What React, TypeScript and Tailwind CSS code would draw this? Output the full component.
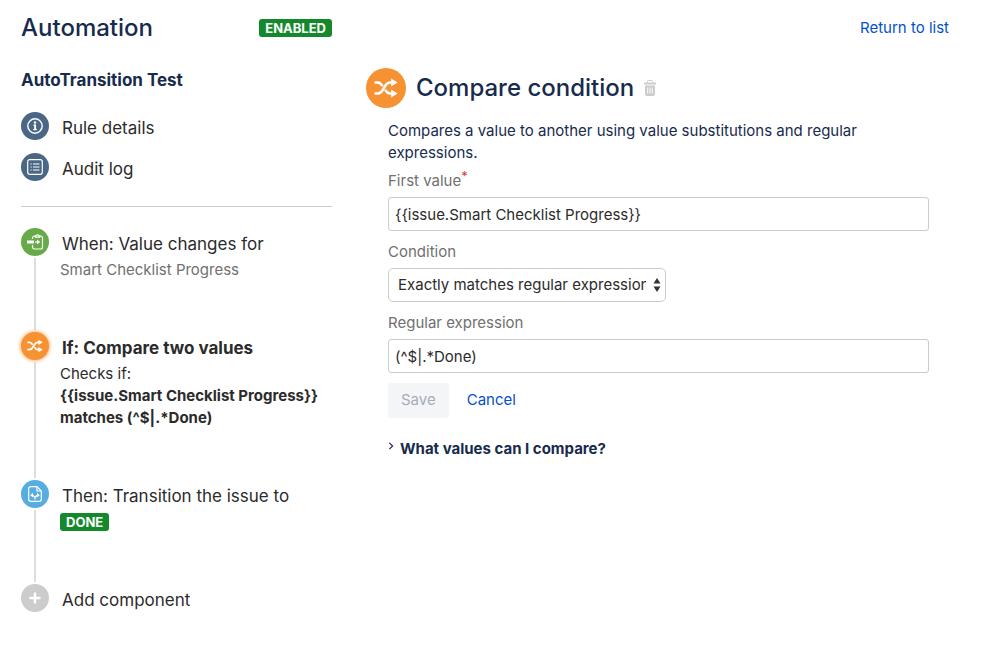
import type { FC, ReactNode } from 'react';
import { useState } from 'react';

type StepProps = {
    icon: ReactNode;
    color: string;
    title: string;
    active?: boolean;
    children?: ReactNode;
};

const ShuffleIcon: FC<{ className: string }> = ({ className }) => (
    <svg viewBox="0 0 24 20" fill="none" className={className} aria-hidden="true">
        <g stroke="currentColor" strokeWidth="2.600">
            <path d="M.5 4.500h3.300c2.300 0 3.500 1.700 4.700 3.700" />
            <path d="M.5 15.500h3.300C10.500 15.500 9.500 4.500 16 4.500h2" />
            <path d="M11.300 11.800c1 2.200 2.200 3.700 4.700 3.700h2" />
        </g>
        <path d="M17.200.5 23.500 4.500l-6.300 4zM17.200 11.500l6.300 4-6.300 4z" fill="currentColor" />
    </svg>
);

const InfoIcon = () => (
    <svg viewBox="0 0 16 16" fill="none" className="size-4" aria-hidden="true">
        <circle cx="8" cy="8" r="7.200" stroke="currentColor" strokeWidth="1.400" />
        <circle cx="8" cy="4.500" r="1.200" fill="currentColor" />
        <path d="M6.500 7.200H8v4.200M6.200 11.600h3.700" stroke="currentColor" strokeWidth="1.200" />
        <path d="M8.200 6.600v5" stroke="currentColor" strokeWidth="1.800" />
    </svg>
);

const ListIcon = () => (
    <svg viewBox="0 0 16 16" fill="none" stroke="currentColor" className="size-4" aria-hidden="true">
        <rect x="0.700" y="0.700" width="14.600" height="14.600" rx="2" strokeWidth="1.200" />
        <path d="M3.500 5h1.200M3.500 8h1.200M3.500 11h1.200M6 5h6.500M6 8h6.500M6 11h6.500" strokeWidth="1.200" />
    </svg>
);

const FieldChangeIcon = () => (
    <svg viewBox="0 0 17 16" fill="none" stroke="currentColor" className="h-4 w-[17px]" aria-hidden="true">
        <path d="M5.500 5V4a2 2 0 0 1 2-2h6a2 2 0 0 1 2 2v9a2 2 0 0 1-2 2h-6a2 2 0 0 1-2-2v-2" strokeWidth="1.200" />
        <path d="M8 3.300V1.800h1.200a1.300 1.300 0 0 1 2.600 0H13v1.500z" strokeWidth="1" />
        <path d="M0 6.500h7v3H0z" fill="currentColor" stroke="none" />
        <path d="M8 8h3" strokeWidth="1.200" />
        <path d="M10 5.500 13.200 8 10 10.500z" fill="currentColor" stroke="none" />
    </svg>
);

const TransitionIcon = () => (
    <svg viewBox="0 0 14 16" fill="none" stroke="currentColor" className="h-4 w-[14px]" aria-hidden="true">
        <path d="M9 .7H2.700a2 2 0 0 0-2 2v10.600a2 2 0 0 0 2 2h8.600a2 2 0 0 0 2-2V5z" strokeWidth="1.200" />
        <path d="M9 .7V5h4.300" strokeWidth="1.200" />
        <path d="M7 13.500v-2.200L4.500 9M7 11.300 9.500 9" strokeWidth="1.200" />
        <path d="M2.200 9.200 5 6.800v4.600zM11.800 9.200 9 6.800v4.600z" fill="currentColor" stroke="none" />
    </svg>
);

const PlusIcon = () => (
    <svg viewBox="0 0 12 12" className="size-3" aria-hidden="true">
        <path d="M6 1.500v9M1.500 6h9" stroke="currentColor" strokeWidth="2.500" strokeLinecap="round" />
    </svg>
);

const TrashIcon = () => (
    <svg viewBox="0 0 12 16" fill="none" className="h-4 w-3" aria-hidden="true">
        <path d="M3.500 2.500V1.200a.7.7 0 0 1 .7-.7h3.600a.7.7 0 0 1 .7.7v1.300" stroke="currentColor" />
        <path d="M0 2.500h12v2H0zM1 5.500h10V14a2 2 0 0 1-2 2H3a2 2 0 0 1-2-2z" fill="currentColor" />
        <path d="M3.700 7.500v6M6 7.500v6M8.300 7.500v6" stroke="#fff" strokeWidth=".9" />
    </svg>
);

const Lozenge: FC<{ children: ReactNode }> = ({ children }) => (
    <span className="rounded-[3px] bg-[#14892c] px-[6px] text-[13px] leading-[18px] font-bold text-white">
        {children}
    </span>
);

const Step: FC<StepProps> = ({ icon, color, title, active, children }) => (
    <li className="flex gap-[11px]">
        <div className="flex flex-col items-center">
            <span
                className={`flex size-7 shrink-0 items-center justify-center rounded-full text-white ${color} ${
                    active ? 'shadow-[0_0_4px_#f79232]' : ''
                }`}
            >
                {icon}
            </span>
            {children && <span className="my-[2px] w-[2px] flex-1 bg-[#ddd]" />}
        </div>
        <div className={children ? 'min-w-0 flex-1 pt-1 pb-[51px]' : 'pt-1'}>
            <button
                type="button"
                className={`block pl-[2px] text-left text-[17px] leading-6 whitespace-nowrap ${active ? 'font-bold' : ''}`}
            >
                {title}
            </button>
            {children && <div className="mt-[3px] text-[15px] leading-[22px] whitespace-nowrap">{children}</div>}
        </div>
    </li>
);

const App = () => {
    const [firstValue, setFirstValue] = useState('{{issue.Smart Checklist Progress}}');
    const [condition, setCondition] = useState('regex');
    const [expression, setExpression] = useState('(^$|.*Done)');

    return (
        <div className="flex min-h-screen bg-white pr-[49px] pb-10 pl-[21px] font-['Inter',sans-serif] text-[#2b2b2b]">
            <aside className="w-[311px] shrink-0 pt-3">
                <div className="flex items-center justify-between">
                    <h1 className="text-2xl leading-8 font-medium text-[#172b4d]">Automation</h1>
                    <Lozenge>ENABLED</Lozenge>
                </div>
                <h2 className="mt-6 text-[17px] leading-6 font-bold text-[#172b4d]">AutoTransition Test</h2>

                <nav className="mt-5 flex flex-col gap-[13px] border-b border-[#ccc] pb-[25px] text-[17px]">
                    <a href="#details" className="flex items-center gap-[13px]">
                        <span className="flex size-7 items-center justify-center rounded-full bg-[#4a6785] text-white">
                            <InfoIcon />
                        </span>
                        <span className="pt-1 leading-6">Rule details</span>
                    </a>
                    <a href="#audit" className="flex items-center gap-[13px]">
                        <span className="flex size-7 items-center justify-center rounded-full bg-[#4a6785] text-white">
                            <ListIcon />
                        </span>
                        <span className="pt-1 leading-6">Audit log</span>
                    </a>
                </nav>

                <ol className="mt-[21px]">
                    <Step icon={<FieldChangeIcon />} color="bg-[#67ab49]" title="When: Value changes for">
                        <p className="text-[#707070]">Smart Checklist Progress</p>
                    </Step>
                    <Step
                        icon={<ShuffleIcon className="h-[14px] w-4" />}
                        color="bg-[#f79232]"
                        title="If: Compare two values"
                        active
                    >
                        <p>Checks if:</p>
                        <p className="font-bold">
                            {'{{issue.Smart Checklist Progress}}'}
                            <br />
                            matches (^$|.*Done)
                        </p>
                    </Step>
                    <Step icon={<TransitionIcon />} color="bg-[#56ade1]" title="Then: Transition the issue to">
                        <div className="flex h-[22px] items-center">
                            <Lozenge>DONE</Lozenge>
                        </div>
                    </Step>
                    <Step icon={<PlusIcon />} color="bg-[#ccc]" title="Add component" />
                </ol>
            </aside>

            <main className="ml-[34px] min-w-0 flex-1 pt-4">
                <div className="flex justify-end">
                    <a href="#list" className="text-[15px] leading-6 text-[#0052cc]">
                        Return to list
                    </a>
                </div>

                <div className="mt-7 flex items-center gap-[10px]">
                    <span className="flex size-10 items-center justify-center rounded-full bg-[#f79232] text-white">
                        <ShuffleIcon className="h-5 w-6" />
                    </span>
                    <h2 className="text-2xl leading-8 font-medium text-[#172b4d]">Compare condition</h2>
                    <button type="button" aria-label="Delete" className="text-[#ccc]">
                        <TrashIcon />
                    </button>
                </div>

                <form className="mt-3 pr-5 pl-[22px] text-[15px]" onSubmit={(e) => e.preventDefault()}>
                    <p className="leading-[22px] text-[#172b4d]">
                        Compares a value to another using value substitutions and regular expressions.
                    </p>

                    <label htmlFor="first" className="mt-[6px] block leading-[22px] text-[#707070]">
                        First value<span className="align-top text-[13px] leading-3 text-[#d04437]">*</span>
                    </label>
                    <input
                        type="text"
                        id="first"
                        value={firstValue}
                        onChange={(e) => setFirstValue(e.target.value)}
                        className="mt-[5px] block h-[34px] w-full rounded-[3px] border border-[#ccc] px-[6px]"
                    />

                    <label htmlFor="condition" className="mt-[10px] block leading-[22px] text-[#707070]">
                        Condition
                    </label>
                    <div className="relative mt-[5px] w-[278px]">
                        <select
                            id="condition"
                            value={condition}
                            onChange={(e) => setCondition(e.target.value)}
                            className="block h-[34px] w-full appearance-none rounded-[5px] border border-[#ccc] bg-white pr-[19px] pl-[9px]"
                        >
                            <option value="equals">Equals</option>
                            <option value="regex">Exactly matches regular expression</option>
                        </select>
                        <svg
                            viewBox="0 0 8 14"
                            className="pointer-events-none absolute top-[10px] right-[5px] h-[14px] w-2"
                            aria-hidden="true"
                        >
                            <path d="M4 0 7.500 5.500h-7zM4 14 .5 8.500h7z" fill="#333" />
                        </svg>
                    </div>

                    <label htmlFor="regex" className="mt-[10px] block leading-[22px] text-[#707070]">
                        Regular expression
                    </label>
                    <input
                        type="text"
                        id="regex"
                        value={expression}
                        onChange={(e) => setExpression(e.target.value)}
                        className="mt-[5px] block h-[34px] w-full rounded-[3px] border border-[#ccc] px-[6px]"
                    />

                    <div className="mt-[10px] flex items-center gap-[18px]">
                        <button
                            type="submit"
                            disabled
                            className="h-[35px] rounded-[3px] bg-[#f4f5f7] px-[13px] text-[#a5adba]"
                        >
                            Save
                        </button>
                        <button type="button" className="text-[#0052cc]">
                            Cancel
                        </button>
                    </div>

                    <button type="button" className="mt-5 flex items-center gap-[6px] font-bold text-[#172b4d]">
                        <svg viewBox="0 0 6 10" fill="none" className="mb-[6px] h-2 w-[6px]" aria-hidden="true">
                            <path d="m1 1 4 4-4 4" stroke="currentColor" strokeWidth="1.500" />
                        </svg>
                        What values can I compare?
                    </button>
                </form>
            </main>
        </div>
    );
};

export default App;
